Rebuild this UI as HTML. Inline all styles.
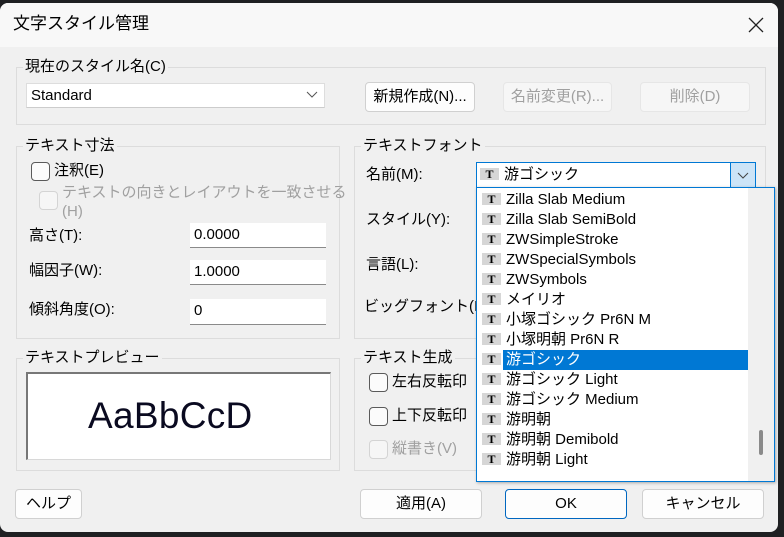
<!DOCTYPE html>
<html><head><meta charset="utf-8"><style>
*{box-sizing:border-box;margin:0;padding:0}
body{width:784px;height:537px;background:#1f2022;position:relative;overflow:hidden;font-family:"Liberation Sans","Noto Sans CJK JP",sans-serif;font-size:15px;color:#000}
.win{position:absolute;left:0;top:3px;width:778px;height:529px;background:#f0f0f0;border-radius:8px;overflow:hidden}
.tb{position:absolute;left:0;top:0;width:100%;height:44px;background:#f8f8f8}
.a{position:absolute;white-space:nowrap;line-height:18px}
.g{position:absolute;border:1px solid #dcdcdc}
.gl{position:absolute;background:#f0f0f0;padding:0 2px;line-height:18px;white-space:nowrap}
.in{position:absolute;background:#fff;border-bottom:1px solid #8a8a8a;line-height:24px;padding-left:4px}
.btn{position:absolute;background:#fdfdfd;border:1px solid #d0d0d0;border-radius:4px;text-align:center;line-height:28px}
.dis{color:#a0a0a0}
.cb{position:absolute;width:19px;height:19px;border:1px solid #5a5a5a;border-radius:4px;background:#fbfbfb}
.cbd{border-color:#d4d4d4;background:#f6f6f6}
.it{position:absolute;left:2px;height:20px;width:270px;line-height:20px;white-space:nowrap}
.ic{display:inline-block;width:19px;height:12px;background:#d6d6d6;vertical-align:middle;margin:0 5px 0 3px;position:relative;top:-1px;font:bold 12px/12px "Liberation Serif",serif;text-align:center;color:#000}
</style></head><body>
<div class="win">
<div class="tb"></div>
<div class="a" style="left:13px;top:11px;font-size:17px;line-height:20px">文字スタイル管理</div>
<svg class="a" style="left:748px;top:14px" width="16" height="16"><path d="M1 1L15 15M15 1L1 15" stroke="#222" stroke-width="1.3"/></svg>

<div class="g" style="left:16px;top:64px;width:750px;height:58px"></div>
<div class="gl" style="left:23px;top:55px">現在のスタイル名(C)</div>
<div class="in" style="left:26px;top:80px;width:299px;height:25px;border:1px solid #ddd;border-bottom-color:#ccc">Standard</div>
<svg class="a" style="left:306px;top:88px" width="12" height="8"><path d="M1 1L6 6L11 1" stroke="#555" fill="none"/></svg>
<div class="btn" style="left:365px;top:79px;width:110px;height:30px">新規作成(N)...</div>
<div class="btn dis" style="left:503px;top:79px;width:109px;height:30px;border-color:#e6e6e6;background:#f6f6f6">名前変更(R)...</div>
<div class="btn dis" style="left:640px;top:79px;width:110px;height:30px;border-color:#e6e6e6;background:#f6f6f6">削除(D)</div>

<div class="g" style="left:16px;top:143px;width:324px;height:193px"></div>
<div class="gl" style="left:23px;top:134px">テキスト寸法</div>
<div class="cb" style="left:31px;top:159px"></div>
<div class="a" style="left:54px;top:159px">注釈(E)</div>
<div class="cb cbd" style="left:39px;top:188px"></div>
<div class="a dis" style="left:62px;top:180px;line-height:19px">テキストの向きとレイアウトを一致させる<br>(H)</div>
<div class="a" style="left:29px;top:224px">高さ(T):</div>
<div class="in" style="left:190px;top:220px;width:136px;height:25px">0.0000</div>
<div class="a" style="left:29px;top:259px">幅因子(W):</div>
<div class="in" style="left:190px;top:257px;width:136px;height:25px">1.0000</div>
<div class="a" style="left:29px;top:298px">傾斜角度(O):</div>
<div class="in" style="left:190px;top:296px;width:136px;height:26px">0</div>

<div class="g" style="left:16px;top:355px;width:324px;height:113px"></div>
<div class="gl" style="left:23px;top:346px">テキストプレビュー</div>
<div class="a" style="left:26px;top:369px;width:305px;height:88px;background:#fff;border:1px solid #d8d8d8;border-top:2px solid #777;border-left:2px solid #777"></div>
<div class="a" style="left:88px;top:392px;font-size:37px;line-height:42px;color:#0a0a20;letter-spacing:0.3px">AaBbCcD</div>

<div class="g" style="left:354px;top:143px;width:412px;height:193px"></div>
<div class="gl" style="left:361px;top:134px">テキストフォント</div>
<div class="a" style="left:366px;top:163px">名前(M):</div>
<div class="a" style="left:366px;top:208px">スタイル(Y):</div>
<div class="a" style="left:366px;top:253px">言語(L):</div>
<div class="a" style="left:364px;top:295px">ビッグフォント(I):</div>
<div class="a" style="left:476px;top:159px;width:280px;height:26px;background:#fff;border:1px solid #0078d4;line-height:24px"><span class="ic">T</span>游ゴシック</div>
<div class="a" style="left:730px;top:159px;width:26px;height:26px;background:#cce4f7;border:1px solid #0078d4"></div>
<svg class="a" style="left:737px;top:169px" width="12" height="8"><path d="M1 1L6 6L11 1" stroke="#444" fill="none"/></svg>

<div class="g" style="left:354px;top:355px;width:412px;height:113px"></div>
<div class="gl" style="left:361px;top:346px">テキスト生成</div>
<div class="cb" style="left:369px;top:370px"></div>
<div class="a" style="left:392px;top:370px">左右反転印</div>
<div class="cb" style="left:369px;top:404px"></div>
<div class="a" style="left:392px;top:404px">上下反転印</div>
<div class="cb cbd" style="left:369px;top:437px"></div>
<div class="a dis" style="left:392px;top:437px">縦書き(V)</div>

<div class="btn" style="left:15px;top:486px;width:67px;height:30px">ヘルプ</div>
<div class="btn" style="left:360px;top:486px;width:122px;height:30px">適用(A)</div>
<div class="btn" style="left:505px;top:486px;width:122px;height:30px;border-color:#0067c0">OK</div>
<div class="btn" style="left:642px;top:486px;width:122px;height:30px">キャンセル</div>

<div class="a" style="left:476px;top:184px;width:299px;height:295px;background:#fff;border:1px solid #0078d4;box-shadow:1px 1px 3px rgba(0,0,0,.3)">
<div style="position:absolute;right:0;top:0;width:26px;height:100%;background:#f0f0f0"></div>
<div style="position:absolute;left:282px;top:242px;width:4px;height:25px;background:#8a8a8a;border-radius:2px"></div>
<div class="it" style="top:2px"><span class="ic">T</span>Zilla Slab Medium</div>
<div class="it" style="top:22px"><span class="ic">T</span>Zilla Slab SemiBold</div>
<div class="it" style="top:42px"><span class="ic">T</span>ZWSimpleStroke</div>
<div class="it" style="top:62px"><span class="ic">T</span>ZWSpecialSymbols</div>
<div class="it" style="top:82px"><span class="ic">T</span>ZWSymbols</div>
<div class="it" style="top:102px"><span class="ic">T</span>メイリオ</div>
<div class="it" style="top:122px"><span class="ic">T</span>小塚ゴシック Pr6N M</div>
<div class="it" style="top:142px"><span class="ic">T</span>小塚明朝 Pr6N R</div>
<div style="position:absolute;left:26px;top:162px;width:245px;height:20px;background:#0078d4"></div>
<div class="it" style="top:162px"><span class="ic">T</span><span style="color:#fff">游ゴシック</span></div>
<div class="it" style="top:182px"><span class="ic">T</span>游ゴシック Light</div>
<div class="it" style="top:202px"><span class="ic">T</span>游ゴシック Medium</div>
<div class="it" style="top:222px"><span class="ic">T</span>游明朝</div>
<div class="it" style="top:242px"><span class="ic">T</span>游明朝 Demibold</div>
<div class="it" style="top:262px"><span class="ic">T</span>游明朝 Light</div>
</div>
</div>
</body></html>
